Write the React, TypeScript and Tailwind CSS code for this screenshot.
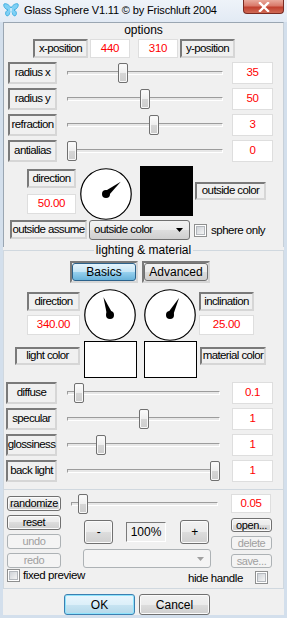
import React from "react";

type Slide = { label: string; value: string; thumb: number };

const topSliders: Slide[] = [
  { label: "radius x", value: "35", thumb: 56 },
  { label: "radius y", value: "50", thumb: 78 },
  { label: "refraction", value: "3", thumb: 87 },
  { label: "antialias", value: "0", thumb: 5 },
];

const lightSliders: Slide[] = [
  { label: "diffuse", value: "0.1", thumb: 12 },
  { label: "specular", value: "1", thumb: 77 },
  { label: "glossiness", value: "1", thumb: 34 },
  { label: "back light", value: "1", thumb: 148 },
];

// sunken caption panel (delphi TPanel look)
function Panel({ className = "", children }: { className?: string; children?: React.ReactNode }) {
  return (
    <div
      className={`flex items-center justify-center whitespace-nowrap border-2 border-t-[#7a7a7a] border-l-[#7a7a7a] border-r-[#d6d6d6] border-b-[#d6d6d6] text-[11.5px] tracking-[-0.6px] text-black ${className}`}
    >
      {children}
    </div>
  );
}

function Value({ className = "", children }: { className?: string; children?: React.ReactNode }) {
  return (
    <div className={`flex items-center justify-center border border-[#dedede] bg-white text-[11.5px] tracking-[-0.3px] text-[#ff0000] ${className}`}>
      {children}
    </div>
  );
}

function Slider({ className = "", thumb }: { className?: string; thumb: number }) {
  return (
    <div className={`relative h-[22px] ${className}`}>
      <div className="absolute left-0 right-0 top-[9px] h-[4px] border border-t-[#9c9c9c] border-l-[#9c9c9c] border-r-white border-b-white bg-[#e7e7e7]" />
      <div
        className="absolute top-[1px] h-[20px] w-[10px] rounded-[2px] border border-[#707070] bg-[linear-gradient(#fcfcfc,#eeeeee_50%,#d6d6d6_50%,#cdcdcd)] shadow-[inset_0_0_0_1px_#f8f8f8]"
        style={{ left: thumb - 5 }}
      />
    </div>
  );
}

function Btn({ className = "", disabled = false, children }: { className?: string; disabled?: boolean; children?: React.ReactNode }) {
  return disabled ? (
    <div className={`flex items-center justify-center rounded-[3px] border border-[#adb2b5] bg-[#f4f4f4] text-[11px] tracking-[-0.4px] text-[#a0a0a0] ${className}`}>
      {children}
    </div>
  ) : (
    <div
      className={`flex items-center justify-center rounded-[3px] border border-[#707070] bg-[linear-gradient(#f2f2f2,#ebebeb_50%,#dddddd_50%,#cfcfcf)] shadow-[inset_0_0_0_1px_#fbfbfb] text-[11px] tracking-[-0.4px] text-black ${className}`}
    >
      {children}
    </div>
  );
}

function Check() {
  return (
    <div className="h-[13px] w-[13px] border border-[#8e8f8f] bg-white p-[1px]">
      <div className="h-full w-full border border-[#b3b7bc] bg-[linear-gradient(135deg,#cfd3d8,#f4f4f4)]" />
    </div>
  );
}

function Dial({ angle, size, className = "" }: { angle: number; size: number; className?: string }) {
  const c = size / 2;
  const r = c - 0.75;
  const a = (angle * Math.PI) / 180;
  const L = r - 6;
  const tx = c + L * Math.sin(a);
  const ty = c - L * Math.cos(a);
  const w = 3;
  const p1 = [c + w * Math.cos(a), c + w * Math.sin(a)];
  const p2 = [c - w * Math.cos(a), c - w * Math.sin(a)];
  return (
    <svg width={size} height={size} className={className}>
      <circle cx={c} cy={c} r={r} fill="white" stroke="black" strokeWidth={1.2} />
      <polygon points={`${tx},${ty} ${p1[0]},${p1[1]} ${p2[0]},${p2[1]}`} fill="black" />
      <circle cx={c} cy={c} r={4} fill="black" />
    </svg>
  );
}

function TitleBar() {
  return (
    <div className="flex h-[22px] items-start bg-[linear-gradient(#eef3f9,#e2eaf4)]">
      <svg width="16" height="14" viewBox="0 0 16 14" className="ml-[3px] mt-[3px] shrink-0">
        <path d="M8 5 C6 1 2 0 1 1 C0 3 2 6 5 7 C2 8 2 12 4 13 C6 13 7 10 8 8 C9 10 10 13 12 13 C14 12 14 8 11 7 C14 6 16 3 15 1 C14 0 10 1 8 5 Z" fill="#7fd0f5" stroke="#2aa4dc" strokeWidth="0.8" />
        <path d="M8 5 L8 11" stroke="#ffffff" strokeWidth="1" />
      </svg>
      <div className="ml-[5px] mt-[3px] shrink-0 whitespace-nowrap text-[11px] leading-[14px] tracking-[-0.15px] text-black">Glass Sphere V1.11 © by Frischluft 2004</div>
      <div className="ml-auto mr-[3px] flex h-[14px] w-[41px] shrink-0 items-center justify-center rounded-b-[4px] border border-t-0 border-[#7a2b22] bg-[linear-gradient(#e9a99c,#d9796a_45%,#c1402f_55%,#cf6a55)]">
        <svg width="12" height="10" viewBox="0 0 12 10">
          <path d="M2 1 L10 9 M10 1 L2 9" stroke="white" strokeWidth="2.4" strokeLinecap="square" />
        </svg>
      </div>
    </div>
  );
}

export default function App() {
  return (
    <div className="relative flex h-[618px] w-[287px] flex-col overflow-hidden bg-[#d3dfec] font-['Liberation_Sans',Arial,sans-serif]">
      <TitleBar />
      <div className="mx-[3px] flex h-[593px] flex-col bg-[#f0f0f0]">
        {/* options */}
        <div className="flex h-[225px] flex-col border-x border-t border-[#9aa6b2] border-r-[#c7d0d9]">
          <div className="h-[14px] text-center text-[12px] leading-[14px]">options</div>
          <div className="ml-[29px] mt-[2px] flex h-[19px]">
            <Panel className="h-[19px] w-[55px]">x-position</Panel>
            <Value className="ml-[2px] h-[19px] w-[40px]">440</Value>
            <Value className="ml-[8px] h-[19px] w-[40px]">310</Value>
            <Panel className="ml-[2px] h-[19px] w-[55px]">y-position</Panel>
          </div>
          {topSliders.map((s) => (
            <div key={s.label} className="ml-[4px] mt-[4px] flex h-[22px]">
              <Panel className="h-[22px] w-[49px]">{s.label}</Panel>
              <Slider className="ml-[10px] w-[156px]" thumb={s.thumb} />
              <Value className="ml-[9px] h-[22px] w-[41px]">{s.value}</Value>
            </div>
          ))}
          <div className="mt-[4px] flex h-[54px] items-start">
            <div className="ml-[23px] flex w-[49px] flex-col">
              <Panel className="mt-[3px] h-[19px]">direction</Panel>
              <Value className="mt-[6px] h-[20px]">50.00</Value>
            </div>
            <Dial angle={50} size={52} className="ml-[4px] mt-[2px]" />
            <div className="ml-[8px] h-[50px] w-[53px] bg-black" />
            <Panel className="ml-[2px] mt-[16px] h-[18px] w-[71px]">outside color</Panel>
          </div>
          <div className="ml-[6px] flex h-[20px] items-start">
            <Panel className="h-[19px] w-[77px]">outside assume</Panel>
            <div className="ml-[2px] flex h-[20px] w-[101px] items-center rounded-[3px] border border-[#707070] bg-[linear-gradient(#f2f2f2,#ebebeb_50%,#dddddd_50%,#cfcfcf)] pl-[4px] text-[11.5px] tracking-[-0.5px]">
              <span>outside color</span>
              <svg width="7" height="4" className="ml-auto mr-[6px]">
                <path d="M0 0 H7 L3.5 4 Z" fill="black" />
              </svg>
            </div>
            <div className="ml-[4px] mt-[4px]">
              <Check />
            </div>
            <div className="ml-[4px] mt-[3px] text-[11.5px] leading-[14px] tracking-[-0.5px]">sphere only</div>
          </div>
        </div>

        {/* lighting & material */}
        <div className="mt-[3px] flex h-[239px] flex-col border border-[#d0d8df] border-b-0">
          <div className="mx-auto -mt-[8px] h-[14px] bg-[#f0f0f0] px-[2px] text-[12px] leading-[14px]">lighting &amp; material</div>
          <div className="ml-[66px] mt-[4px] flex h-[22px] gap-[4px]">
            <div className="h-[22px] w-[68px] border-2 border-t-[#7a7a7a] border-l-[#7a7a7a] border-r-[#d6d6d6] border-b-[#d6d6d6]">
              <div className="flex h-full items-center justify-center rounded-[3px] border border-[#2c628b] bg-[linear-gradient(#e5f4fc,#c4e5f6_50%,#98d1ef_50%,#68b3db)] text-[12px]">Basics</div>
            </div>
            <div className="h-[22px] w-[68px] border-2 border-t-[#7a7a7a] border-l-[#7a7a7a] border-r-[#d6d6d6] border-b-[#d6d6d6]">
              <div className="flex h-full items-center justify-center rounded-[3px] border border-[#707070] bg-[linear-gradient(#f2f2f2,#ebebeb_50%,#dddddd_50%,#cfcfcf)] text-[12px]">Advanced</div>
            </div>
          </div>
          <div className="mt-[6px] flex h-[52px] items-start">
            <div className="ml-[23px] flex w-[53px] flex-col">
              <Panel className="mt-[3px] h-[19px]">direction</Panel>
              <Value className="mt-[4px] h-[20px]">340.00</Value>
            </div>
            <Dial angle={340} size={52} className="ml-[4px]" />
            <Dial angle={28} size={52} className="ml-[8px]" />
            <div className="ml-[3px] flex w-[55px] flex-col">
              <Panel className="mt-[3px] h-[19px]">inclination</Panel>
              <Value className="mt-[4px] h-[20px]">25.00</Value>
            </div>
          </div>
          <div className="flex h-[37px] items-start">
            <Panel className="ml-[11px] mt-[6px] h-[18px] w-[65px]">light color</Panel>
            <div className="ml-[4px] h-[37px] w-[53px] border border-black bg-white" />
            <div className="ml-[7px] h-[37px] w-[53px] border border-black bg-white" />
            <Panel className="ml-[3px] mt-[6px] h-[18px] w-[66px]">material color</Panel>
          </div>
          {lightSliders.map((s) => (
            <div key={s.label} className="ml-[2px] mt-[4px] flex h-[22px]">
              <Panel className="h-[22px] w-[51px]">{s.label}</Panel>
              <Slider className="ml-[10px] w-[153px]" thumb={s.thumb} />
              <Value className="ml-[12px] h-[22px] w-[41px]">{s.value}</Value>
            </div>
          ))}
        </div>

        {/* presets */}
        <div className="flex h-[100px] flex-col border border-[#d0d8df]">
          <div className="mt-[4px] flex h-[19px] items-start">
            <Btn className="ml-[3px] mt-[2px] h-[15px] w-[54px]">randomize</Btn>
            <Slider className="-mt-[1px] ml-[10px] w-[147px]" thumb={12} />
            <Value className="ml-[13px] h-[19px] w-[40px]">0.05</Value>
          </div>
          <div className="mt-[2px] flex h-[53px] items-start">
            <div className="ml-[3px] flex w-[54px] flex-col gap-[4px]">
              <Btn className="h-[15px]">reset</Btn>
              <Btn disabled className="h-[15px]">undo</Btn>
              <Btn disabled className="h-[15px]">redo</Btn>
            </div>
            <div className="ml-[22px] flex w-[128px] flex-col">
              <div className="ml-[1px] mt-[5px] flex h-[24px] items-center">
                <Btn className="h-[24px] w-[29px] text-[12px]">-</Btn>
                <div className="ml-[13px] flex h-[20px] w-[40px] items-center justify-center border border-t-[#7a7a7a] border-l-[#7a7a7a] border-r-white border-b-white bg-[#f0f0f0] text-[12px]">100%</div>
                <Btn className="ml-[14px] h-[24px] w-[29px] text-[12px]">+</Btn>
              </div>
              <div className="mt-[5px] flex h-[19px] items-center rounded-[3px] border border-[#adb2b5] bg-[#f4f4f4]">
                <svg width="7" height="4" className="ml-auto mr-[6px]">
                  <path d="M0 0 H7 L3.5 4 Z" fill="#a0a0a0" />
                </svg>
              </div>
            </div>
            <div className="ml-[20px] mt-[3px] flex w-[41px] flex-col gap-[4px]">
              <Btn className="h-[14px]">open...</Btn>
              <Btn disabled className="h-[14px]">delete</Btn>
              <Btn disabled className="h-[14px]">save...</Btn>
            </div>
          </div>
          <div className="mt-[1px] flex h-[14px] items-start">
            <div className="ml-[3px]">
              <Check />
            </div>
            <div className="ml-[3px] text-[11.5px] leading-[12px] tracking-[-0.4px]">fixed preview</div>
            <div className="ml-auto mt-[3px] text-[11.5px] leading-[12px] tracking-[-0.4px]">hide handle</div>
            <div className="ml-[12px] mr-[15px] mt-[2px]">
              <Check />
            </div>
          </div>
        </div>

        <div className="ml-[61px] mt-[5px] flex gap-[4px]">
          <div className="flex h-[21px] w-[71px] items-center justify-center rounded-[3px] border border-[#3c7fb1] bg-[linear-gradient(#eaf6fd,#dceff9_50%,#c8e4f2_50%,#b5d9ea)] shadow-[inset_0_0_0_1px_#8ee3fb] text-[12px]">
            OK
          </div>
          <Btn className="h-[21px] w-[71px] text-[12px] tracking-normal">Cancel</Btn>
        </div>
      </div>
    </div>
  );
}
